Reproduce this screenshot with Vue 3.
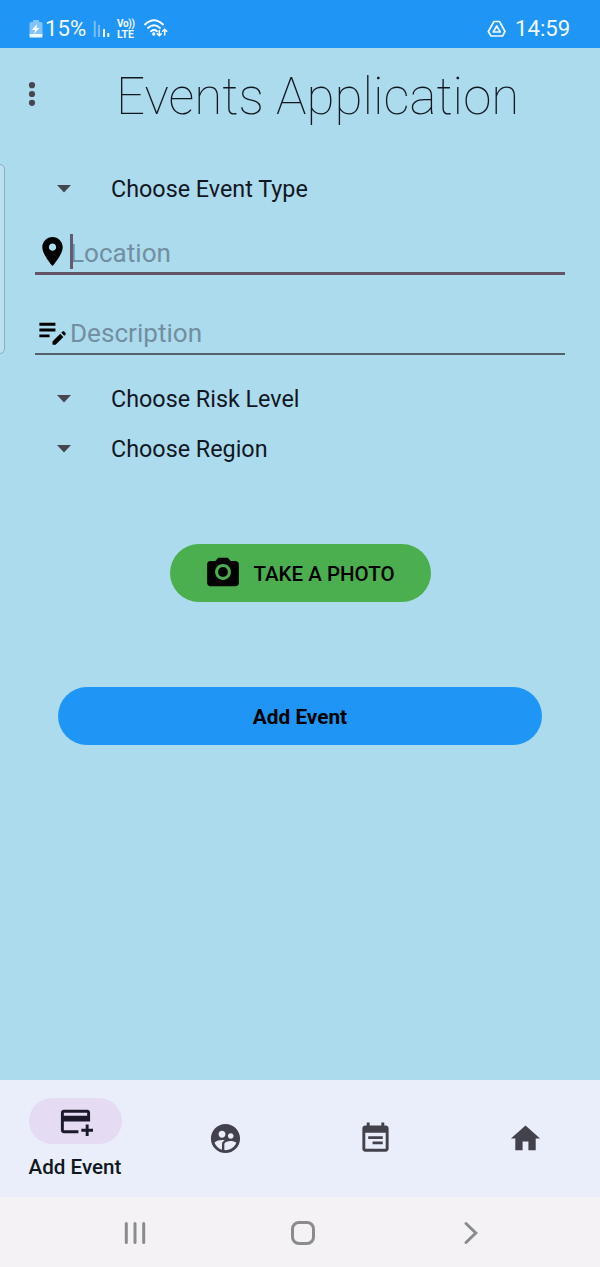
<script setup>
const selects = { type: 'Choose Event Type', others: ['Choose Risk Level', 'Choose Region'] }
const tabs = [
  {
    name: 'people',
    path: 'M11.99 2c-5.52 0-10 4.48-10 10s4.48 10 10 10 10-4.48 10-10-4.48-10-10-10zm3.61 6.34c1.07 0 1.93.86 1.93 1.93 0 1.07-.86 1.93-1.93 1.93-1.07 0-1.93-.86-1.93-1.93-.01-1.07.86-1.93 1.93-1.93zm-6-1.58c1.3 0 2.36 1.06 2.36 2.36 0 1.3-1.06 2.36-2.36 2.36s-2.36-1.06-2.36-2.36c0-1.31 1.05-2.36 2.36-2.36zm0 9.13v3.75c-2.4-.75-4.3-2.6-5.14-4.96 1.05-1.12 3.67-1.69 5.14-1.69.53 0 1.2.08 1.9.22-1.64.87-1.9 2.02-1.9 2.68zM11.99 20c-.27 0-.53-.01-.79-.04v-4.07c0-1.42 2.94-2.13 4.4-2.13 1.07 0 2.92.39 3.84 1.15-1.17 2.97-4.06 5.09-7.45 5.09z'
  },
  {
    name: 'calendar',
    path: 'M19 3h-1V1h-2v2H8V1H6v2H5c-1.1 0-2 .9-2 2v14c0 1.1.9 2 2 2h14c1.1 0 2-.9 2-2V5c0-1.1-.9-2-2-2zm0 16H5V8h14v11zM7 10.4h10v1.9H7zM10 14.1h7v1.9h-7z'
  },
  { name: 'home', path: 'M10 20v-6h4v6h5v-8h3L12 3 2 12h3v8z' }
]
</script>

<template>
  <div class="screen">
    <header class="status">
      <svg class="battery" width="14" height="18" viewBox="0 0 14 18">
        <path d="M4 0h6v2h2q1.500 0 1.500 1.500v11H.5v-11Q.5 2 2 2h2z" fill="#82c3f8" />
        <path d="M.5 14h13v2.500q0 1-1 1h-11q-1 0-1-1z" fill="#eef8ff" />
        <path d="M8 4 3 10h3l-1 4 5.500-6H7.500z" fill="#fff" />
      </svg>
      <span class="percent">15%</span>
      <svg class="signal" width="18" height="18" viewBox="0 0 18 18">
        <path d="M1.800 1v16M6 5v12" stroke="#77bdf7" stroke-width="2" />
        <path d="M11 9v8M15.300 13v4" stroke="#f4faff" stroke-width="2" />
      </svg>
      <span class="volte"><span>Vo))</span><span class="lte">LTE</span></span>
      <svg class="wifi" width="24" height="19" viewBox="0 0 24 19" fill="none" stroke="#fff" stroke-width="1.800" stroke-linecap="round">
        <path d="M1 5.500q9-8.500 18 0M4 9q6-5.500 12 0M7 12.200q3-2.500 6 0" />
        <circle cx="9.800" cy="15" r=".8" fill="#fff" />
        <path d="M15.300 11.500v5M13.300 14.700l2 2 2-2M20.700 16v-5.500M18.700 12.300l2-2 2 2" stroke-width="1.500" />
      </svg>
      <svg class="drive" width="20" height="18" viewBox="0 0 20 18" fill="none" stroke="#f2faff" stroke-width="1.700" stroke-linejoin="round">
        <path d="M7 1.500h5.500l5.500 10-2.500 4.500H4L1.300 11.500zM9.750 6l-3.500 6h7z" />
      </svg>
      <span class="clock">14:59</span>
    </header>

    <main class="content">
      <div class="edge-handle"></div>
      <div class="titlebar">
        <svg class="more" width="8" height="26" viewBox="0 0 8 26" fill="#474650">
          <circle cx="4" cy="4.200" r="3.100" /><circle cx="4" cy="13" r="3.100" /><circle cx="4" cy="21.800" r="3.100" />
        </svg>
        <h1>Events Application</h1>
      </div>

      <div class="select first">
        <svg width="14" height="8" viewBox="0 0 14 8"><path d="M0 0h14L7 7.500z" fill="#474650" /></svg>
        <span>{{ selects.type }}</span>
      </div>

      <div class="field focused">
        <svg width="35" height="35" viewBox="0 0 24 24"><path d="M12 2C8.130 2 5 5.130 5 9c0 5.250 7 13 7 13s7-7.750 7-13c0-3.870-3.130-7-7-7zm0 9.500c-1.380 0-2.500-1.120-2.500-2.500s1.120-2.500 2.500-2.500 2.500 1.120 2.500 2.500-1.120 2.500-2.500 2.500z" /></svg>
        <span class="hint">Location</span>
        <i class="caret"></i>
      </div>
      <div class="field description">
        <svg width="35" height="35" viewBox="0 0 24 24"><path d="M3 10h11v2H3v-2zm0-2h11V6H3v2zm0 8h7v-2H3v2zm15.010-3.130.71-.71c.39-.39 1.020-.39 1.410 0l.71.71c.39.39.39 1.020 0 1.410l-.71.71-2.120-2.120zm-.71.71-5.300 5.300V21h2.120l5.300-5.300-2.120-2.120z" /></svg>
        <span class="hint">Description</span>
      </div>

      <div class="others">
        <div v-for="label in selects.others" :key="label" class="select">
          <svg width="14" height="8" viewBox="0 0 14 8"><path d="M0 0h14L7 7.500z" fill="#474650" /></svg>
          <span>{{ label }}</span>
        </div>
      </div>

      <button class="photo">
        <svg width="38" height="38" viewBox="0 0 24 24"><circle cx="12" cy="12" r="3.100" /><path d="M9 3 7.170 5H4c-1.100 0-2 .9-2 2v12c0 1.100.9 2 2 2h16c1.100 0 2-.9 2-2V7c0-1.100-.9-2-2-2h-3.170L15 3H9zm3 14c-2.760 0-5-2.240-5-5s2.240-5 5-5 5 2.240 5 5-2.240 5-5 5z" /></svg>
        <span>TAKE A PHOTO</span>
      </button>
      <button class="add"><span>Add Event</span></button>
    </main>

    <nav class="tabs">
      <div class="tab active">
        <div class="pill">
          <svg width="35" height="35" viewBox="0 0 24 24" fill="#1c1a2a"><path d="M20 4H4c-1.110 0-1.990.89-1.990 2L2 18c0 1.110.89 2 2 2h10v-2H4v-6h18V6c0-1.110-.89-2-2-2zm0 4H4V6h16v2zm4 9v2h-3v3h-2v-3h-3v-2h3v-3h2v3h3z" /></svg>
        </div>
        <span>Add Event</span>
      </div>
      <div v-for="tab in tabs" :key="tab.name" class="tab">
        <svg width="35" height="35" viewBox="0 0 24 24" fill="#43424c"><path fill-rule="evenodd" :d="tab.path" /></svg>
      </div>
    </nav>

    <footer class="system">
      <svg width="24" height="24" viewBox="0 0 24 24"><path d="M3.300 2.500v19M12 2.500v19M20.700 2.500v19" /></svg>
      <svg class="home-key" width="26" height="26" viewBox="0 0 26 26"><rect x="2.500" y="2.500" width="21" height="21" rx="6.500" /></svg>
      <svg width="16" height="24" viewBox="0 0 16 24"><path d="M3 2.500 12.800 12 3 21.500" /></svg>
    </footer>
  </div>
</template>

<style>
html, body { margin: 0; background: #addbee; }
</style>

<style scoped>
.screen {
  width: 600px;
  height: 1267px;
  display: flex;
  flex-direction: column;
  overflow: hidden;
  background: #addbee;
  font-family: Roboto, "Liberation Sans", sans-serif;
  color: #10171f;
}
svg { display: block; flex: none; }
.status {
  height: 48px;
  flex: none;
  box-sizing: border-box;
  padding: 9px 30px 0 29px;
  display: flex;
  align-items: center;
  background: #1f95f5;
  color: #f2faff;
  font-size: 22.200px;
}
.percent { margin: -2px 0 0 2px; width: 41px; white-space: nowrap; }
.signal { margin-left: 7px; }
.volte {
  margin-left: 6px;
  width: 19px;
  display: flex;
  flex-direction: column;
  font-size: 10px;
  font-weight: 700;
  line-height: 11px;
  white-space: nowrap;
}
.volte span:first-child { letter-spacing: -0.3px; }
.volte .lte { font-size: 10.500px; }
.wifi { margin-left: 8px; }
.drive { margin-left: auto; }
.clock { margin: -2px 0 0 8px; width: 55px; white-space: nowrap; }
.content {
  position: relative;
  flex: 1;
  display: flex;
  flex-direction: column;
}
.edge-handle {
  position: absolute;
  left: -13px;
  top: 116px;
  width: 16px;
  height: 188px;
  border: 1px solid #8faebb;
  border-radius: 5px;
  background: #bbe0ef;
  box-sizing: content-box;
}
.titlebar { height: 98px; display: flex; align-items: center; }
.more { margin: -6px 0 0 28px; }
h1 {
  margin: 0 0 0 80px;
  font-size: 51.100px;
  line-height: 60px;
  font-weight: 100;
  white-space: nowrap;
}
.select {
  height: 50px;
  display: flex;
  align-items: center;
  padding-left: 57px;
  font-size: 23.330px;
}
.select svg { margin-top: -1px; }
.select span { margin-left: 40px; white-space: nowrap; }
.first { margin-top: 18px; }
.field {
  position: relative;
  margin: 0 35px;
  display: flex;
  align-items: center;
  box-sizing: border-box;
  font-size: 26.100px;
}
.hint { color: #718fa0; white-space: nowrap; }
.focused { height: 61px; border-bottom: 3px solid #635367; padding-top: 20px; }
.focused svg { margin-top: -3px; }
.caret {
  position: absolute;
  left: 35px;
  top: 20px;
  width: 2.500px;
  height: 35px;
  background: #635a70;
}
.description { height: 80px; border-bottom: 2px solid #53616d; padding-top: 38px; }
.description svg { margin-top: -4px; }
.others { margin-top: 19px; }
button {
  border: 0;
  padding: 0;
  height: 58px;
  border-radius: 29px;
  align-self: center;
  display: flex;
  align-items: center;
  justify-content: center;
  font-family: inherit;
  font-size: 20.400px;
  color: #000;
  white-space: nowrap;
}
button span { margin-top: 2px; }
.photo { width: 261px; margin-top: 70px; background: #4bae4f; font-weight: 500; }
.photo span { font-size: 20.500px; }
.photo svg { margin: -3px 11px 0 -1px; }
.add { width: 484px; margin-top: 85px; background: #1f95f5; font-weight: 700; font-size: 20.800px; }
.tabs {
  height: 117px;
  flex: none;
  display: grid;
  grid-template-columns: repeat(4, 1fr);
  background: #e9eefa;
}
.tab { display: flex; align-items: center; justify-content: center; }
.active {
  flex-direction: column;
  justify-content: flex-start;
  padding-top: 18px;
  font-size: 20.600px;
  font-weight: 500;
}
.pill {
  width: 93px;
  height: 46px;
  margin-bottom: 11px;
  border-radius: 23px;
  background: #e5dbf3;
  display: flex;
  align-items: center;
  justify-content: center;
}
.system {
  height: 70px;
  flex: none;
  display: flex;
  align-items: center;
  justify-content: space-between;
  box-sizing: border-box;
  padding: 1px 121px 0 123px;
  background: #f4f2f5;
  fill: none;
  stroke: #898b8d;
  stroke-width: 3;
  stroke-linecap: round;
}
.home-key { margin-right: 4px; }
</style>
